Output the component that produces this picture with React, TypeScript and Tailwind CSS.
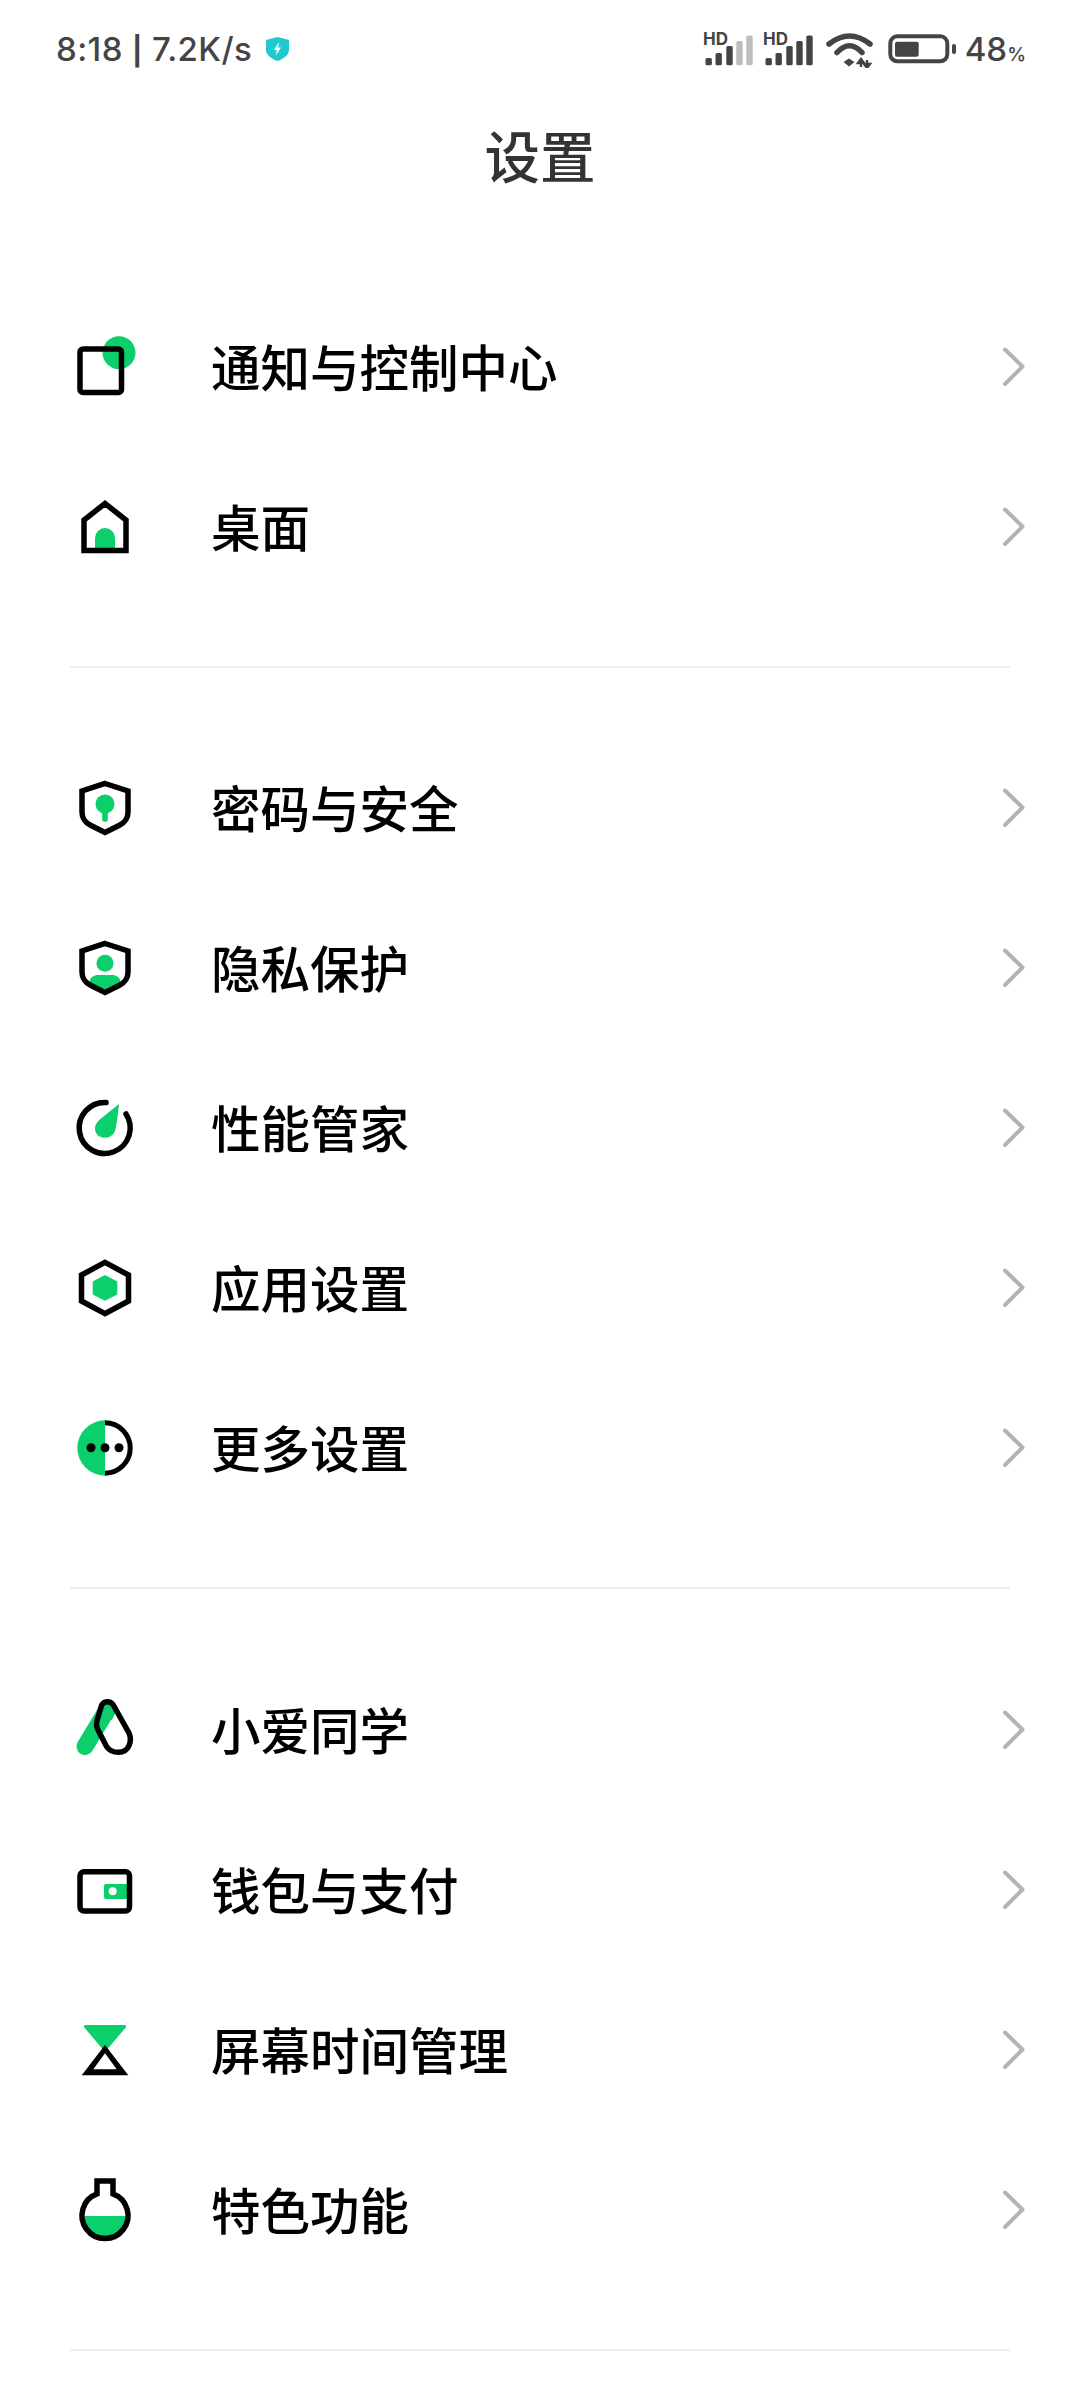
import React from "react";

const G = "#0acf6b";
const K = "#000000";
const SW = 5.5;

function Box({ children }: { children: React.ReactNode }) {
  return (
    <svg width="64" height="64" viewBox="0 0 64 64" fill="none" className="shrink-0">
      {children}
    </svg>
  );
}

const icons: Record<string, React.ReactNode> = {
  notify: (
    <Box>
      <circle cx="47" cy="17.7" r="16.5" fill={G} />
      <rect x="8" y="14" width="41.5" height="43.5" rx="3" stroke={K} strokeWidth={SW} />
    </Box>
  ),
  home: (
    <Box>
      <path d="M23 53V43a10 10 0 0 1 20 0V53Z" fill={G} />
      <path d="M12 55.5V25L33 8.5 54 25V55.5Z" stroke={K} strokeWidth={SW} />
    </Box>
  ),
  lock: (
    <Box>
      <circle cx="33" cy="28" r="9.5" fill={G} />
      <rect x="30.2" y="30" width="5.6" height="15.7" rx="2" fill={G} />
      <path d="M33 7.5 56 15V36C56 44 52 47 47 49.5L33 56.5 19 49.5C14 47 10 44 10 36V15Z" stroke={K} strokeWidth={SW} />
    </Box>
  ),
  privacy: (
    <Box>
      <circle cx="33" cy="27.3" r="8.5" fill={G} />
      <path d="M17.5 46C18 41 22 39 26 39H40C44 39 48 41 48.5 46L33 53.5Z" fill={G} />
      <path d="M33 7.5 56 15V36C56 44 52 47 47 49.5L33 56.5 19 49.5C14 47 10 44 10 36V15Z" stroke={K} strokeWidth={SW} />
    </Box>
  ),
  perf: (
    <Box>
      <path d="M47 8C46 18 45 26 43.5 33 42 39 38 41.7 33 41.7 27 41.7 23 38 23 32.5 23 28 26 25 29 22.5Z" fill={G} />
      <path d="M54 18A25.5 25.5 0 1 1 34 6.5" stroke={K} strokeWidth={SW} strokeLinecap="round" />
    </Box>
  ),
  apps: (
    <Box>
      <path d="M33 19 45.3 25.5V38.5L33 44.7 20.7 38.5V25.5Z" fill={G} />
      <path d="M33 6.3 56.5 19V45L33 57.7 9.5 45V19Z" stroke={K} strokeWidth={SW} />
    </Box>
  ),
  more: (
    <Box>
      <path d="M33 4.3A27.7 27.7 0 0 0 33 59.7Z" fill={G} />
      <path d="M33 6.8A25.2 25.2 0 0 1 33 57.2" stroke={K} strokeWidth="5" />
      <circle cx="19" cy="31.7" r="4.5" fill={K} />
      <circle cx="33" cy="31.7" r="4.5" fill={K} />
      <circle cx="47" cy="31.7" r="4.5" fill={K} />
    </Box>
  ),
  ai: (
    <Box>
      <path d="M13 48.5 35 12" stroke={G} strokeWidth="17" strokeLinecap="round" />
      <path d="M36 3 46 9 40 22 30 22Z" fill={G} />
      <path d="M29.7 7Q32 3.7 35.3 3.7 39 3.7 41.3 7L57 35C60 42 58 54.3 46.3 54.3 41 54.3 37 52 34.7 48.7L26 32C24 28 24 25 25.5 21Z" fill="none" stroke={K} strokeWidth={SW} strokeLinejoin="round" />
    </Box>
  ),
  wallet: (
    <Box>
      <path d="M34 26H55V41H34A2 2 0 0 1 32 39V28A2 2 0 0 1 34 26Z" fill={G} />
      <circle cx="40.7" cy="33.3" r="4" fill="#ffffff" />
      <rect x="8" y="13.8" width="49.5" height="39.2" rx="4" stroke={K} strokeWidth={SW} />
    </Box>
  ),
  hourglass: (
    <Box>
      <path d="M13.5 7H52.5C54 7 54.5 8.5 53.5 9.7L33 34 12.5 9.7C11.5 8.5 12 7 13.5 7Z" fill={G} />
      <path fillRule="evenodd" clipRule="evenodd" d="M33 27 56.3 57.3H9.7ZM33 35.3 21.3 51.3H44.7Z" fill={K} />
    </Box>
  ),
  flask: (
    <Box>
      <path d="M12.5 38H53.5A20.5 20.5 0 0 1 12.5 38Z" fill={G} />
      <path d="M25 3H41V15.9A23 23 0 1 1 25 15.9Z" stroke={K} strokeWidth="5.5" />
    </Box>
  ),
};

function Chevron() {
  return (
    <svg width="28" height="44" viewBox="0 0 28 44" fill="none" className="shrink-0">
      <path d="M5 4.5 22.5 21.5 5 39" stroke="#b3b3b3" strokeWidth="4" strokeLinecap="round" strokeLinejoin="round" />
    </svg>
  );
}

function Row({ icon, label }: { icon: string; label: string }) {
  return (
    <div className="flex h-[160px] items-center justify-between pl-[72px] pr-[52px]">
      <div className="flex items-center">
        {icons[icon]}
        <span className="ml-[75px] mb-[3px] text-[49.5px] font-medium leading-none text-black">{label}</span>
      </div>
      <Chevron />
    </div>
  );
}

function Signal({ full }: { full: boolean }) {
  const bars = [
    [2.7, 25],
    [12.7, 20],
    [23.5, 13],
    [33.5, 8],
    [43.5, 2.5],
  ];
  return (
    <svg width="50" height="37" viewBox="0 -4 50 37" className="mb-[4px] shrink-0">
      <text x="0" y="12" fontSize="17" fontWeight="700" fill="#444444" fontFamily="Inter, sans-serif">
        HD
      </text>
      {bars.map(([x, y], i) => (
        <rect key={i} x={x - 0.2} y={y} width="6.4" height={32.3 - y} rx="1.5" fill={full || i < 3 ? "#444444" : "#bdbdbd"} />
      ))}
    </svg>
  );
}

function Wifi() {
  return (
    <svg width="47" height="35" viewBox="0 0 47 35" fill="none" className="shrink-0">
      <path d="M3 11Q23.5 -5 44 11" stroke="#444444" strokeWidth="5.5" strokeLinecap="round" />
      <path d="M11 19.5Q23.5 6 36 19.5" stroke="#444444" strokeWidth="5.5" strokeLinecap="round" />
      <path d="M17.5 29 23 25.5 28.5 29 23 33.5Z" fill="#444444" />
      <path d="M35 26V34M35 26 32 30H38ZM41 35V27M41 35 38 31H44Z" stroke="#444444" strokeWidth="2.4" fill="#444444" />
    </svg>
  );
}

function Battery() {
  return (
    <svg width="68" height="31" viewBox="0 0 68 31" fill="none" className="shrink-0">
      <rect x="2.3" y="2.3" width="57" height="25" rx="7" stroke="#444444" strokeWidth="4" />
      <rect x="7" y="7.7" width="23.7" height="15" rx="2" fill="#444444" />
      <rect x="64" y="10" width="4" height="10" rx="2" fill="#444444" />
    </svg>
  );
}

function Shield() {
  return (
    <svg width="23" height="24" viewBox="0 0 23 24" className="shrink-0">
      <path d="M11.5 0 23 3V13C23 18 17 22 11.5 24 6 22 0 18 0 13V3Z" fill="#1fc9cf" />
      <path d="M13 5 8 13H11L9.5 19 15 10.5H12Z" fill="#ffffff" />
    </svg>
  );
}

function StatusBar() {
  return (
    <div className="flex h-[98px] items-center justify-between pl-[56px] pr-[54px] text-[#444444]" style={{ fontFamily: "Inter, sans-serif" }}>
      <div className="flex items-center">
        <span className="text-[33px] font-medium leading-none tracking-[0.4px]">
          8:18 <span className="text-[28px] font-bold">|</span> 7.2K/s
        </span>
        <span className="ml-[14px]">
          <Shield />
        </span>
      </div>
      <div className="flex items-center">
        <Signal full={false} />
        <span className="ml-[10px]">
          <Signal full />
        </span>
        <span className="ml-[13px] mt-[2px]">
          <Wifi />
        </span>
        <span className="ml-[15px]">
          <Battery />
        </span>
        <span className="ml-[9px] text-[33px] font-medium leading-none">
          48<span className="text-[19px]">%</span>
        </span>
      </div>
    </div>
  );
}

function Divider() {
  return <div className="ml-[70px] mr-[70px] h-[2px] bg-[#eeeeee]" />;
}

export default function App() {
  return (
    <div
      className="h-[2400px] w-[1080px] overflow-hidden bg-white"
      style={{ fontFamily: '"Noto Sans CJK SC", "Noto Sans", sans-serif' }}
    >
      <StatusBar />
      <div className="flex h-[118px] items-center justify-center pb-[5px] text-[55.5px] font-medium leading-none text-[#333333]">设置</div>
      <div className="pt-[71px]">
        <Row icon="notify" label="通知与控制中心" />
        <Row icon="home" label="桌面" />
      </div>
      <div className="pt-[59px]">
        <Divider />
      </div>
      <div className="pt-[60px]">
        <Row icon="lock" label="密码与安全" />
        <Row icon="privacy" label="隐私保护" />
        <Row icon="perf" label="性能管家" />
        <Row icon="apps" label="应用设置" />
        <Row icon="more" label="更多设置" />
      </div>
      <div className="pt-[59px]">
        <Divider />
      </div>
      <div className="pt-[61px]">
        <Row icon="ai" label="小爱同学" />
        <Row icon="wallet" label="钱包与支付" />
        <Row icon="hourglass" label="屏幕时间管理" />
        <Row icon="flask" label="特色功能" />
      </div>
      <div className="pt-[59px]">
        <Divider />
      </div>
    </div>
  );
}
